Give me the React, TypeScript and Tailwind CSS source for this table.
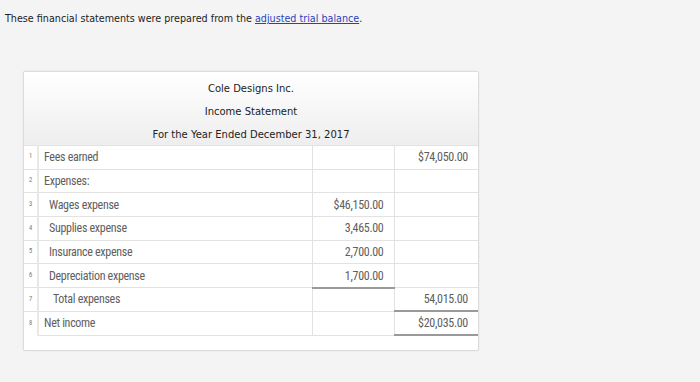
import type { ReactNode } from 'react';

type Row = {
  label: string;
  indent: string;
  mid?: string;
  right?: string;
  midRule?: boolean;
  rightRule?: boolean;
};

const rows: Row[] = [
  { label: 'Fees earned', indent: 'pl-[5px]', right: '$74,050.00' },
  { label: 'Expenses:', indent: 'pl-[5px]' },
  { label: 'Wages expense', indent: 'pl-[10px]', mid: '$46,150.00' },
  { label: 'Supplies expense', indent: 'pl-[10px]', mid: '3,465.00' },
  { label: 'Insurance expense', indent: 'pl-[10px]', mid: '2,700.00' },
  { label: 'Depreciation expense', indent: 'pl-[10px]', mid: '1,700.00', midRule: true },
  { label: 'Total expenses', indent: 'pl-[14px]', right: '54,015.00', rightRule: true },
  { label: 'Net income', indent: 'pl-[5px]', right: '$20,035.00', rightRule: true },
];

function Amount({ children, rule }: { children?: ReactNode; rule?: boolean }) {
  return (
    <td
      className={
        'border-l border-[#e2e2e2] pr-[10px] text-right ' +
        (rule ? 'border-b-2 border-b-[#9a9a9a]' : 'border-b border-b-[#e2e2e2]')
      }
    >
      {children}
    </td>
  );
}

export default function App() {
  return (
    <div className="min-h-[382px] bg-[#f4f4f4] pt-[12px] font-['DejaVu_Sans',sans-serif] text-[10px] text-[#222]">
      <p className="pl-[5px] text-[9.6px] leading-[14px]">
        These financial statements were prepared from the{' '}
        <a className="text-[#2b3fc0] underline">adjusted trial balance</a>.
      </p>

      <div className="ml-[23px] mt-[45px] w-[456px] rounded-[2px] border border-[#dcdcdc] bg-white pb-[14px] shadow-[0_0_2px_rgba(0,0,0,0.08)]">
        <div className="flex flex-col items-center gap-[10px] bg-gradient-to-b from-white to-[#eeeeee] pt-[10px] pb-[4px] leading-[13px]">
          <div>Cole Designs Inc.</div>
          <div>Income Statement</div>
          <div>For the Year Ended December 31, 2017</div>
        </div>

        <table className="w-full table-fixed border-collapse font-['Liberation_Sans_Narrow','Roboto_Condensed',sans-serif] text-[12px] tracking-[-0.3px] text-[#5e5e5e]">
          <colgroup>
            <col className="w-[14px]" />
            <col className="w-[274px]" />
            <col className="w-[82px]" />
            <col className="w-[84px]" />
          </colgroup>
          <tbody>
            {rows.map((r, i) => (
              <tr key={r.label} className="h-[23.7px] border-t border-[#e2e2e2]">
                <td className="border-r-2 border-[#e8e8e8] text-center text-[6.5px] text-[#777]">{i + 1}</td>
                <td className={r.indent + ' border-b border-[#e2e2e2]'}>{r.label}</td>
                <Amount rule={r.midRule}>{r.mid}</Amount>
                <Amount rule={r.rightRule}>{r.right}</Amount>
              </tr>
            ))}
          </tbody>
        </table>
      </div>
    </div>
  );
}
